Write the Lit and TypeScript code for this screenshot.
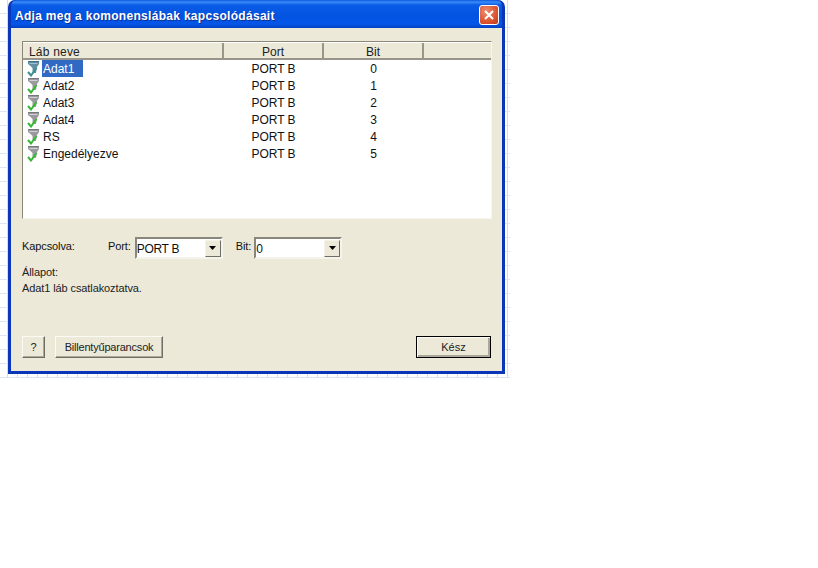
import { LitElement, html, css, svg } from "lit";
import { customElement } from "lit/decorators.js";

const rows = [
  ["Adat1", "0"],
  ["Adat2", "1"],
  ["Adat3", "2"],
  ["Adat4", "3"],
  ["RS", "4"],
  ["Engedélyezve", "5"],
];

const pinIcon = (selected: boolean) => html`<svg class="pin" width="14" height="17" viewBox="0 0 14 17">
  ${svg`<path d="M2 1H13V4L11 7L10.5 10L10 13H6.5L6.5 8L4.5 6L2 4Z" fill="${selected ? "#5f8fa0" : "#9a9a9e"}"/>
  <path d="M2 1.5H13" stroke="${selected ? "#3f6f85" : "#77777c"}" stroke-width="1" fill="none"/>
  <path d="M3.5 3.5H11.5" stroke="${selected ? "#9cc0d0" : "#d2d2d6"}" stroke-width="1" fill="none"/>`}
  ${selected
    ? svg`<path d="M2 12L5 15.5L10.5 8" stroke="#3f8f8f" stroke-width="2" fill="none"/>`
    : svg`<path d="M2 12L5 15.5L10.5 8" stroke="#35b835" stroke-width="2" fill="none"/>`}
</svg>`;

const arrow = html`<svg width="7" height="4" viewBox="0 0 7 4"><path d="M0 0H7L3.5 4Z" fill="#000"/></svg>`;

@customElement("app-root")
export class AppRoot extends LitElement {
  static styles = css`
    :host {
      display: block;
      width: 818px;
      height: 568px;
      background: #fff;
      overflow: hidden;
      font-family: "Liberation Sans", Arial, sans-serif;
      color: #111;
    }
    .grid {
      width: 510px;
      height: 378px;
      padding-left: 8px;
      box-sizing: border-box;
      background-image:
        repeating-linear-gradient(to bottom, transparent 0 13px, #dde5f6 13px 14px),
        repeating-linear-gradient(to right, transparent 0 7px, #d3dbee 7px 8px, transparent 8px 10px);
    }
    .win {
      width: 497px;
      height: 374px;
      box-sizing: border-box;
      display: flex;
      flex-direction: column;
      background: #0a3fd0;
      border-radius: 7px 7px 0 0;
      border: solid #0a36b8;
      border-width: 0 3px 3px 3px;
    }
    .title {
      height: 28px;
      flex: none;
      display: flex;
      align-items: center;
      justify-content: space-between;
      padding: 3px 3px 0 4px;
      box-sizing: border-box;
      border-radius: 6px 6px 0 0;
      background: linear-gradient(to bottom, #0a56e0 0, #3c8cf5 2px, #0a5ce6 5px, #0353e2 16px, #0556e8 24px, #0340c0 28px);
      color: #fff;
      font-size: 12px;
      font-weight: bold;
      letter-spacing: 0.3px;
      text-shadow: 1px 1px 0 #0a2f96;
    }
    .close {
      width: 20px;
      height: 20px;
      margin-top: -1px;
      box-sizing: border-box;
      border: 1px solid #fff;
      border-radius: 3px;
      background: radial-gradient(circle at 35% 30%, #ec8d70, #d9502c 65%, #bb3a1c);
      display: flex;
      align-items: center;
      justify-content: center;
    }
    .body {
      flex: 1;
      background: #ece9d8;
      padding: 13px 11px 10px 11px;
      display: flex;
      flex-direction: column;
      font-size: 11px;
      letter-spacing: -0.1px;
    }
    .list {
      height: 178px;
      flex: none;
      box-sizing: border-box;
      border: 1px solid;
      border-color: #8a877a #f6f5ee #f6f5ee #8a877a;
      background: #fff;
      font-size: 12px;
      width: 470px;
      letter-spacing: 0;
    }
    .head {
      display: grid;
      grid-template-columns: 201px 100px 100px 1fr;
      height: 18px;
      background: #ece9d8;
      border-top: 1px solid #fff;
      border-bottom: 2px solid #98958a;
      box-sizing: border-box;
    }
    .head div {
      display: flex;
      align-items: center;
      justify-content: center;
      border-right: 2px solid #98958a;
      line-height: 15px;
      padding-top: 2px;
      color: #222;
    }
    .head div:first-child {
      justify-content: flex-start;
      padding-left: 6px;
      letter-spacing: 0.2px;
    }
    .head div:last-child {
      border-right: none;
    }
    .row {
      display: grid;
      grid-template-columns: 200px 100px 100px;
      height: 17px;
      align-items: center;
    }
    .name {
      display: flex;
      align-items: center;
      padding-left: 3px;
      height: 17px;
    }
    .pin {
      flex: none;
      margin-right: 2px;
    }
    .name span {
      padding: 2px 9px 0 1px;
      line-height: 15px;
    }
    .name span.sel {
      background: #316ac5;
      color: #fff;
    }
    .row .c {
      text-align: center;
      padding-left: 1px;
    }
    .connect {
      display: flex;
      align-items: center;
      margin-top: 18px;
      height: 22px;
    }
    .lbl-k {
      width: 86px;
      margin-bottom: 4px;
    }
    .lbl-p {
      margin: 0 4px 4px 0;
    }
    .lbl-b {
      margin: 0 3px 4px 13px;
    }
    .combo {
      box-sizing: border-box;
      height: 22px;
      border: 2px solid;
      border-color: #8a877a #f5f4ec #f5f4ec #8a877a;
      background: #fff;
      display: flex;
      align-items: center;
      justify-content: space-between;
      font-size: 12px;
      letter-spacing: -0.3px;
    }
    .combo span {
      padding-top: 1px;
    }
    .combo.port { width: 88px; }
    .combo.bit { width: 88px; }
    .drop {
      width: 16px;
      height: 17px;
      box-sizing: border-box;
      background: #ece9d8;
      border: 1px solid;
      border-color: #f4f3ea #716f64 #716f64 #f4f3ea;
      display: flex;
      align-items: center;
      justify-content: center;
    }
    .status {
      margin-top: 5px;
      line-height: 16px;
      color: #222;
    }
    .buttons {
      margin-top: auto;
      display: flex;
      gap: 10px;
      margin-bottom: 3px;
    }
    button {
      font: inherit;
      font-size: 11px;
      color: #222;
      height: 22px;
      padding: 0;
      box-sizing: border-box;
      background: #ece9d8;
      border: 1px solid;
      border-color: #fbfaf5 #716f64 #716f64 #fbfaf5;
      box-shadow: inset -1px -1px 0 #aca899;
    }
    .help { width: 23px; }
    .keys { width: 108px; letter-spacing: -0.2px; }
    .done {
      margin-left: auto;
      width: 75px;
      border: 1px solid #000;
      box-shadow: inset 1px 1px 0 #fbfaf5, inset -2px -2px 0 #aca899;
    }
  `;

  render() {
    return html`
      <div class="grid">
        <div class="win">
          <div class="title">
            <span>Adja meg a komonenslábak kapcsolódásait</span>
            <div class="close">
              <svg width="12" height="12" viewBox="0 0 12 12">
                <path d="M2 2L10 10M10 2L2 10" stroke="#fff" stroke-width="2" fill="none" />
              </svg>
            </div>
          </div>
          <div class="body">
            <div class="list">
              <div class="head">
                <div>Láb neve</div>
                <div>Port</div>
                <div>Bit</div>
                <div></div>
              </div>
              ${rows.map(
                ([n, b], i) => html`<div class="row">
                  <div class="name">${pinIcon(i === 0)}<span class=${i === 0 ? "sel" : ""}>${n}</span></div>
                  <div class="c">PORT B</div>
                  <div class="c">${b}</div>
                </div>`
              )}
            </div>
            <div class="connect">
              <span class="lbl-k">Kapcsolva:</span>
              <span class="lbl-p">Port:</span>
              <div class="combo port"><span>PORT B</span><div class="drop">${arrow}</div></div>
              <span class="lbl-b">Bit:</span>
              <div class="combo bit"><span>0</span><div class="drop">${arrow}</div></div>
            </div>
            <div class="status">Állapot:<br />Adat1 láb csatlakoztatva.</div>
            <div class="buttons">
              <button class="help">?</button>
              <button class="keys">Billentyűparancsok</button>
              <button class="done">Kész</button>
            </div>
          </div>
        </div>
      </div>
    `;
  }
}
